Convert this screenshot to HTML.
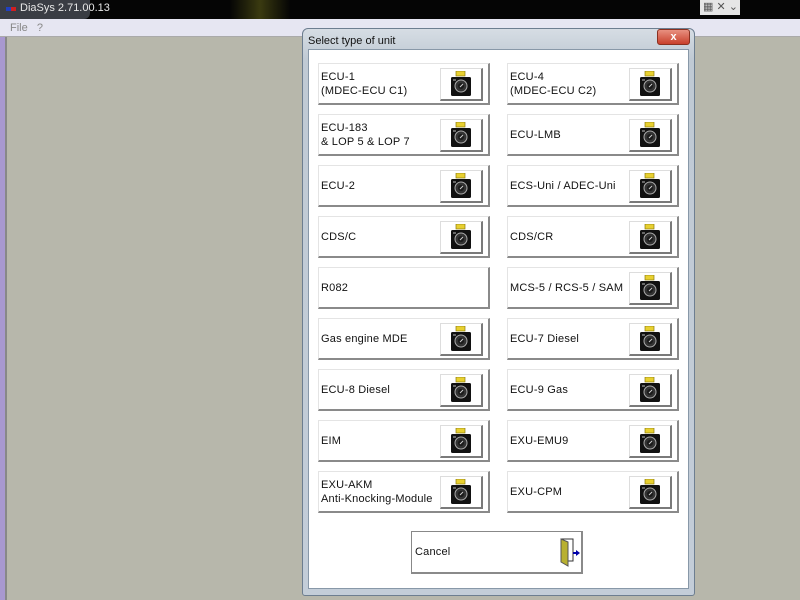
<!DOCTYPE html>
<html><head><meta charset="utf-8"><style>
*{margin:0;padding:0;box-sizing:border-box}
body{width:800px;height:600px;overflow:hidden;position:relative;background:#b7b7ab;font-family:"Liberation Sans",sans-serif;font-size:11px;color:#111}
.abs{position:absolute}
.btn{position:absolute;width:172px;height:42px;background:#fff;border-top:1px solid #e4e4e4;border-left:1px solid #e4e4e4;border-right:2px solid #8a8a8a;border-bottom:2px solid #8a8a8a}
.btn .t{position:absolute;left:2px;top:50%;transform:translateY(-50%);line-height:14px;white-space:nowrap;letter-spacing:0.2px}
.cam{position:absolute;left:121px;top:4px;width:43px;height:33px;background:#fff;border-top:1px solid #ddd;border-left:1px solid #ddd;border-right:2px solid #7a7a7a;border-bottom:2px solid #7a7a7a}
.cam svg{position:absolute;left:10px;top:2px}
</style></head><body>
<div class="abs" style="left:0;top:0;width:800px;height:19px;background:#050505"></div>
<div class="abs" style="left:230px;top:0;width:60px;height:19px;background:linear-gradient(90deg,#050505,#3a3a10,#050505)"></div>
<div class="abs" style="left:0;top:0;width:90px;height:19px;background:#3a3d44;border-radius:0 0 6px 0"></div>
<div class="abs" style="left:6px;top:7px;width:5px;height:4px;background:#2040c0"></div>
<div class="abs" style="left:11px;top:7px;width:5px;height:4px;background:#d02020"></div>
<div class="abs" style="left:20px;top:2px;color:#e8e8e8;font-size:11px">DiaSys 2.71.00.13</div>
<div class="abs" style="left:700px;top:0;width:40px;height:15px;background:#e6e6e6;color:#555;font-size:11px;padding-left:3px">▦ ✕ ⌄</div>
<div class="abs" style="left:0;top:19px;width:800px;height:18px;background:#e6e6f2;border-bottom:1px solid #aaa"></div>
<div class="abs" style="left:10px;top:22px;color:#888;font-size:11px">File &nbsp; ?</div>
<div class="abs" style="left:0;top:37px;width:7px;height:563px;background:#a898d0;border-right:2px solid #888"></div>

<div class="abs" style="left:302px;top:28px;width:393px;height:568px;background:linear-gradient(#d6dde4,#c0cad4 30px,#c3cdd8);border:1px solid #6d7e90;border-radius:6px 6px 3px 3px"></div>
<div class="abs" style="left:308px;top:35px;color:#111;font-size:11px">Select type of unit</div>
<div class="abs" style="left:657px;top:29px;width:33px;height:16px;background:linear-gradient(#e89080,#c8402c);border:1px solid #8a3020;border-radius:3px;color:#fff;font-weight:bold;text-align:center;font-size:11px;line-height:14px">x</div>
<div class="abs" style="left:308px;top:49px;width:381px;height:540px;background:#fff;border:1px solid #8898a8"></div>

<svg width="0" height="0" style="position:absolute"><defs><symbol id="c" viewBox="0 0 20 25"><rect x="5" y="0" width="9" height="5" fill="#e8d030" stroke="#8a7a10" stroke-width=".7"/><rect x="0" y="6" width="20" height="19" rx="1.5" fill="#111"/><rect x="2" y="8" width="3" height="2" fill="#666"/><circle cx="10" cy="15" r="6" fill="#333" stroke="#aaa" stroke-width="1"/><circle cx="10" cy="15" r="3" fill="#1a1a1a"/><path d="M9 16l3-3" stroke="#ccc" stroke-width="1"/></symbol></defs></svg>

<div class="btn" style="left:318px;top:63px"><div class="t">ECU-1<br>(MDEC-ECU C1)</div><div class="cam"><svg width="20" height="25"><use href="#c" width="20" height="25"/></svg></div></div>
<div class="btn" style="left:507px;top:63px"><div class="t">ECU-4<br>(MDEC-ECU C2)</div><div class="cam"><svg width="20" height="25"><use href="#c" width="20" height="25"/></svg></div></div>
<div class="btn" style="left:318px;top:114px"><div class="t">ECU-183<br>&amp; LOP 5 &amp; LOP 7</div><div class="cam"><svg width="20" height="25"><use href="#c" width="20" height="25"/></svg></div></div>
<div class="btn" style="left:507px;top:114px"><div class="t">ECU-LMB</div><div class="cam"><svg width="20" height="25"><use href="#c" width="20" height="25"/></svg></div></div>
<div class="btn" style="left:318px;top:165px"><div class="t">ECU-2</div><div class="cam"><svg width="20" height="25"><use href="#c" width="20" height="25"/></svg></div></div>
<div class="btn" style="left:507px;top:165px"><div class="t">ECS-Uni / ADEC-Uni</div><div class="cam"><svg width="20" height="25"><use href="#c" width="20" height="25"/></svg></div></div>
<div class="btn" style="left:318px;top:216px"><div class="t">CDS/C</div><div class="cam"><svg width="20" height="25"><use href="#c" width="20" height="25"/></svg></div></div>
<div class="btn" style="left:507px;top:216px"><div class="t">CDS/CR</div><div class="cam"><svg width="20" height="25"><use href="#c" width="20" height="25"/></svg></div></div>
<div class="btn" style="left:318px;top:267px"><div class="t">R082</div></div>
<div class="btn" style="left:507px;top:267px"><div class="t">MCS-5 / RCS-5 / SAM</div><div class="cam"><svg width="20" height="25"><use href="#c" width="20" height="25"/></svg></div></div>
<div class="btn" style="left:318px;top:318px"><div class="t">Gas engine MDE</div><div class="cam"><svg width="20" height="25"><use href="#c" width="20" height="25"/></svg></div></div>
<div class="btn" style="left:507px;top:318px"><div class="t">ECU-7 Diesel</div><div class="cam"><svg width="20" height="25"><use href="#c" width="20" height="25"/></svg></div></div>
<div class="btn" style="left:318px;top:369px"><div class="t">ECU-8 Diesel</div><div class="cam"><svg width="20" height="25"><use href="#c" width="20" height="25"/></svg></div></div>
<div class="btn" style="left:507px;top:369px"><div class="t">ECU-9 Gas</div><div class="cam"><svg width="20" height="25"><use href="#c" width="20" height="25"/></svg></div></div>
<div class="btn" style="left:318px;top:420px"><div class="t">EIM</div><div class="cam"><svg width="20" height="25"><use href="#c" width="20" height="25"/></svg></div></div>
<div class="btn" style="left:507px;top:420px"><div class="t">EXU-EMU9</div><div class="cam"><svg width="20" height="25"><use href="#c" width="20" height="25"/></svg></div></div>
<div class="btn" style="left:318px;top:471px"><div class="t">EXU-AKM<br>Anti-Knocking-Module</div><div class="cam"><svg width="20" height="25"><use href="#c" width="20" height="25"/></svg></div></div>
<div class="btn" style="left:507px;top:471px"><div class="t">EXU-CPM</div><div class="cam"><svg width="20" height="25"><use href="#c" width="20" height="25"/></svg></div></div>

<div class="btn" style="left:411px;top:531px;height:43px;border-top:1px solid #888;border-left:1px solid #888"><div class="t" style="left:3px">Cancel</div>
<svg class="abs" style="left:145px;top:5px" width="26" height="30" viewBox="0 0 26 30"><rect x="4" y="2" width="12" height="22" fill="#fff" stroke="#333" stroke-width="1"/><path d="M4 2l7 3v24l-7-4z" fill="#b8b030" stroke="#555" stroke-width="1"/><path d="M16 16h3" stroke="#00a" stroke-width="2"/><path d="M19 13l4 3-4 3z" fill="#00a"/></svg></div>
</body></html>
